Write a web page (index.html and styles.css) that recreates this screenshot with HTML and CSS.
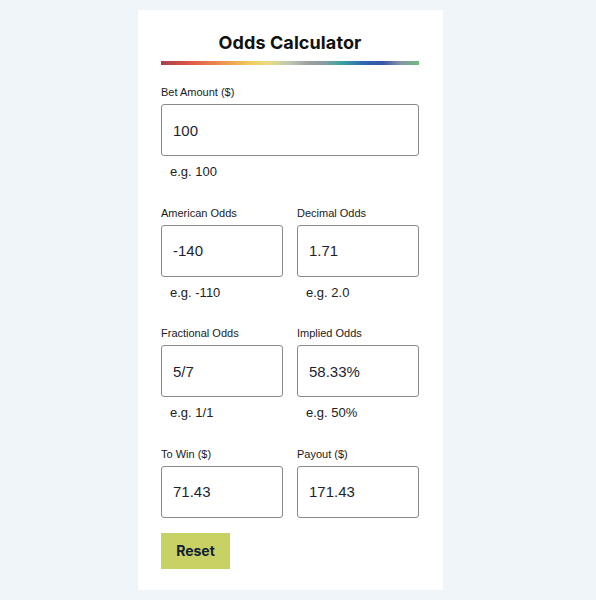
FILE: index.html
```html
<!DOCTYPE html>
<html>
<head>
<meta charset="utf-8">
<link rel="stylesheet" href="styles.css">
</head>
<body>
<div class="card">
  <h1 class="title">Odds Calculator</h1>
  <div class="rainbow"></div>
  <div class="field field-first">
    <label class="label">Bet Amount ($)</label>
    <div class="box">100</div>
    <div class="hint">e.g. 100</div>
  </div>
  <div class="row">
    <div class="field">
      <label class="label">American Odds</label>
      <div class="box">-140</div>
      <div class="hint">e.g. -110</div>
    </div>
    <div class="field">
      <label class="label">Decimal Odds</label>
      <div class="box">1.71</div>
      <div class="hint">e.g. 2.0</div>
    </div>
  </div>
  <div class="row">
    <div class="field">
      <label class="label">Fractional Odds</label>
      <div class="box">5/7</div>
      <div class="hint">e.g. 1/1</div>
    </div>
    <div class="field">
      <label class="label">Implied Odds</label>
      <div class="box">58.33%</div>
      <div class="hint">e.g. 50%</div>
    </div>
  </div>
  <div class="row">
    <div class="field">
      <label class="label">To Win ($)</label>
      <div class="box">71.43</div>
    </div>
    <div class="field">
      <label class="label">Payout ($)</label>
      <div class="box">171.43</div>
    </div>
  </div>
  <button class="reset">Reset</button>
</div>
</body>
</html>
```
FILE: styles.css
```css
html, body { margin: 0; padding: 0; }
body {
  background: #eff5f9;
  font-family: "Liberation Sans", Arial, sans-serif;
  color: #1a1a1a;
  width: 596px;
  height: 600px;
  overflow: hidden;
}
.card {
  background: #ffffff;
  width: 258px;
  margin: 10px 0 0 138px;
  padding: 20px 24px 21px 23px;
  height: 539px;
}
.title {
  margin: 0;
  text-align: center;
  font-family: "Inter", "Liberation Sans", sans-serif;
  font-size: 18px;
  font-weight: 700;
  line-height: 26px;
  color: #111;
  letter-spacing: 0.1px;
}
.rainbow {
  margin-top: 5px;
  height: 4px;
  background: linear-gradient(90deg, #a6404a 0%, #d95448 10%, #ec8a4e 22%, #f2cd5c 35%, #e9dc88 42%, #b9c6b4 50%, #9f9f9f 57%, #7f9fa3 64%, #3aa3a6 70%, #2f65b3 79%, #3a56a8 86%, #8a95a8 93%, #6cbf7a 100%);
}
.field { display: flex; flex-direction: column; flex: 1; min-width: 0; }
.label {
  margin-top: 19px;
  font-size: 11px;
  line-height: 13px;
  color: #1a1a1a;
}
.field-first .label { margin-top: 21px; }
.box {
  margin-top: 5px;
  border: 1px solid #8a8a8a;
  border-radius: 3px;
  box-sizing: border-box;
  height: 52px;
  padding: 0 11px;
  display: flex;
  align-items: center;
  font-size: 15px;
  color: #1f1f2e;
}
.hint {
  margin-top: 8px;
  padding-left: 9px;
  font-size: 13px;
  line-height: 15px;
  color: #222;
  margin-bottom: 8.5px;
}
.row {
  display: flex;
  gap: 14px;
}
.reset {
  margin-top: 15px;
  width: 69px;
  height: 36px;
  border: none;
  background: #c8d264;
  font-family: "Inter", "Liberation Sans", sans-serif;
  font-size: 14px;
  font-weight: 700;
  color: #102030;
  padding: 0;
  cursor: pointer;
}
```
